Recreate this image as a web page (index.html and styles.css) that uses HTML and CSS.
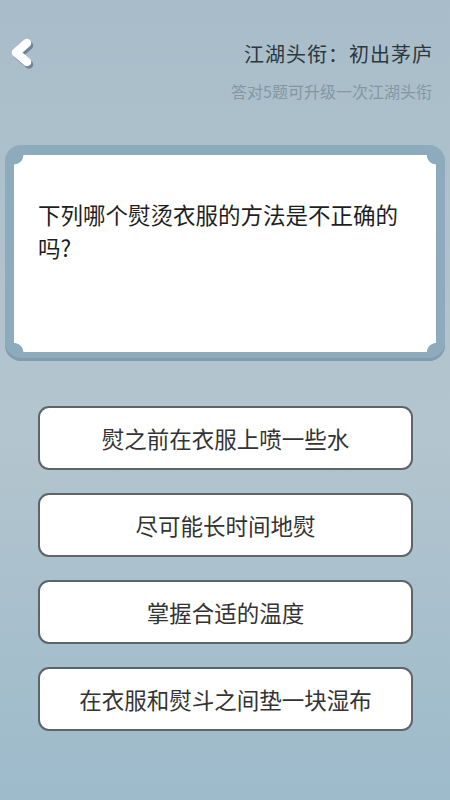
FILE: index.html
```html
<!DOCTYPE html>
<html lang="zh">
<head>
<meta charset="utf-8">
<link rel="stylesheet" href="styles.css">
</head>
<body>
<div class="page">
  <header class="top">
    <svg class="back" width="32" height="38" viewBox="0 0 32 38">
      <path d="M21 9 L10 18.5 L21 28" fill="none" stroke="#6f8696" stroke-width="8.5" stroke-linecap="round" stroke-linejoin="round" transform="translate(2 2.5)"/>
      <path d="M21 9 L10 18.5 L21 28" fill="none" stroke="#ffffff" stroke-width="8.5" stroke-linecap="round" stroke-linejoin="round"/>
    </svg>
    <div class="titles">
      <div class="title">江湖头衔：初出茅庐</div>
      <div class="sub">答对5题可升级一次江湖头衔</div>
    </div>
  </header>
  <section class="card">
    <div class="card-inner">
      <p class="question">下列哪个熨烫衣服的方法是不正确的吗?</p>
    </div>
  </section>
  <div class="options">
    <div class="opt">熨之前在衣服上喷一些水</div>
    <div class="opt">尽可能长时间地熨</div>
    <div class="opt">掌握合适的温度</div>
    <div class="opt">在衣服和熨斗之间垫一块湿布</div>
  </div>
</div>
</body>
</html>
```
FILE: styles.css
```css
html, body {
  margin: 0;
  padding: 0;
}
body {
  width: 450px;
  height: 800px;
  overflow: hidden;
  font-family: "Noto Sans CJK SC", "Noto Sans", sans-serif;
}
.page {
  width: 450px;
  height: 800px;
  background: linear-gradient(180deg, #a8bdc9 0%, #b0c3cd 35%, #b3c5ce 55%, #a6bfcc 80%, #9dbacb 100%);
  display: flex;
  flex-direction: column;
}
.top {
  display: flex;
  justify-content: space-between;
  align-items: flex-start;
  padding: 34px 18px 0 6px;
  height: 111px;
  box-sizing: border-box;
}
.back {
  display: block;
}
.titles {
  display: flex;
  flex-direction: column;
  align-items: flex-end;
}
.title {
  font-size: 20px;
  line-height: 28px;
  letter-spacing: 1px;
  margin-right: -1px;
  color: #2c383f;
  margin-top: 6px;
}
.sub {
  font-size: 16px;
  line-height: 22px;
  color: #8397a3;
  margin-top: 12px;
}
.card {
  margin: 34px 5px 0 5px;
  height: 216px;
  box-sizing: border-box;
  padding: 10px 9px 9px 9px;
  background: #8eaabd;
  border-radius: 16px;
  box-shadow: inset 0 -3px 0 #809db2;
}
.card-inner {
  height: 100%;
  box-sizing: border-box;
  padding: 43px 20px 0 24px;
  background:
    radial-gradient(circle at 0 0, transparent 9px, #ffffff 9.8px) top left / 51% 51% no-repeat,
    radial-gradient(circle at 100% 0, transparent 9px, #ffffff 9.8px) top right / 51% 51% no-repeat,
    radial-gradient(circle at 0 100%, transparent 9px, #ffffff 9.8px) bottom left / 51% 51% no-repeat,
    radial-gradient(circle at 100% 100%, transparent 9px, #ffffff 9.8px) bottom right / 51% 51% no-repeat;
}
.question {
  margin: 0;
  font-size: 22.5px;
  line-height: 33px;
  color: #1e1e1e;
}
.options {
  display: flex;
  flex-direction: column;
  gap: 23px;
  margin: 45px 37px 0 38px;
}
.opt {
  height: 64px;
  box-sizing: border-box;
  border: 2px solid #5e6569;
  border-radius: 11px;
  background: #ffffff;
  display: flex;
  align-items: center;
  justify-content: center;
  font-size: 22.5px;
  color: #333333;
}
```
